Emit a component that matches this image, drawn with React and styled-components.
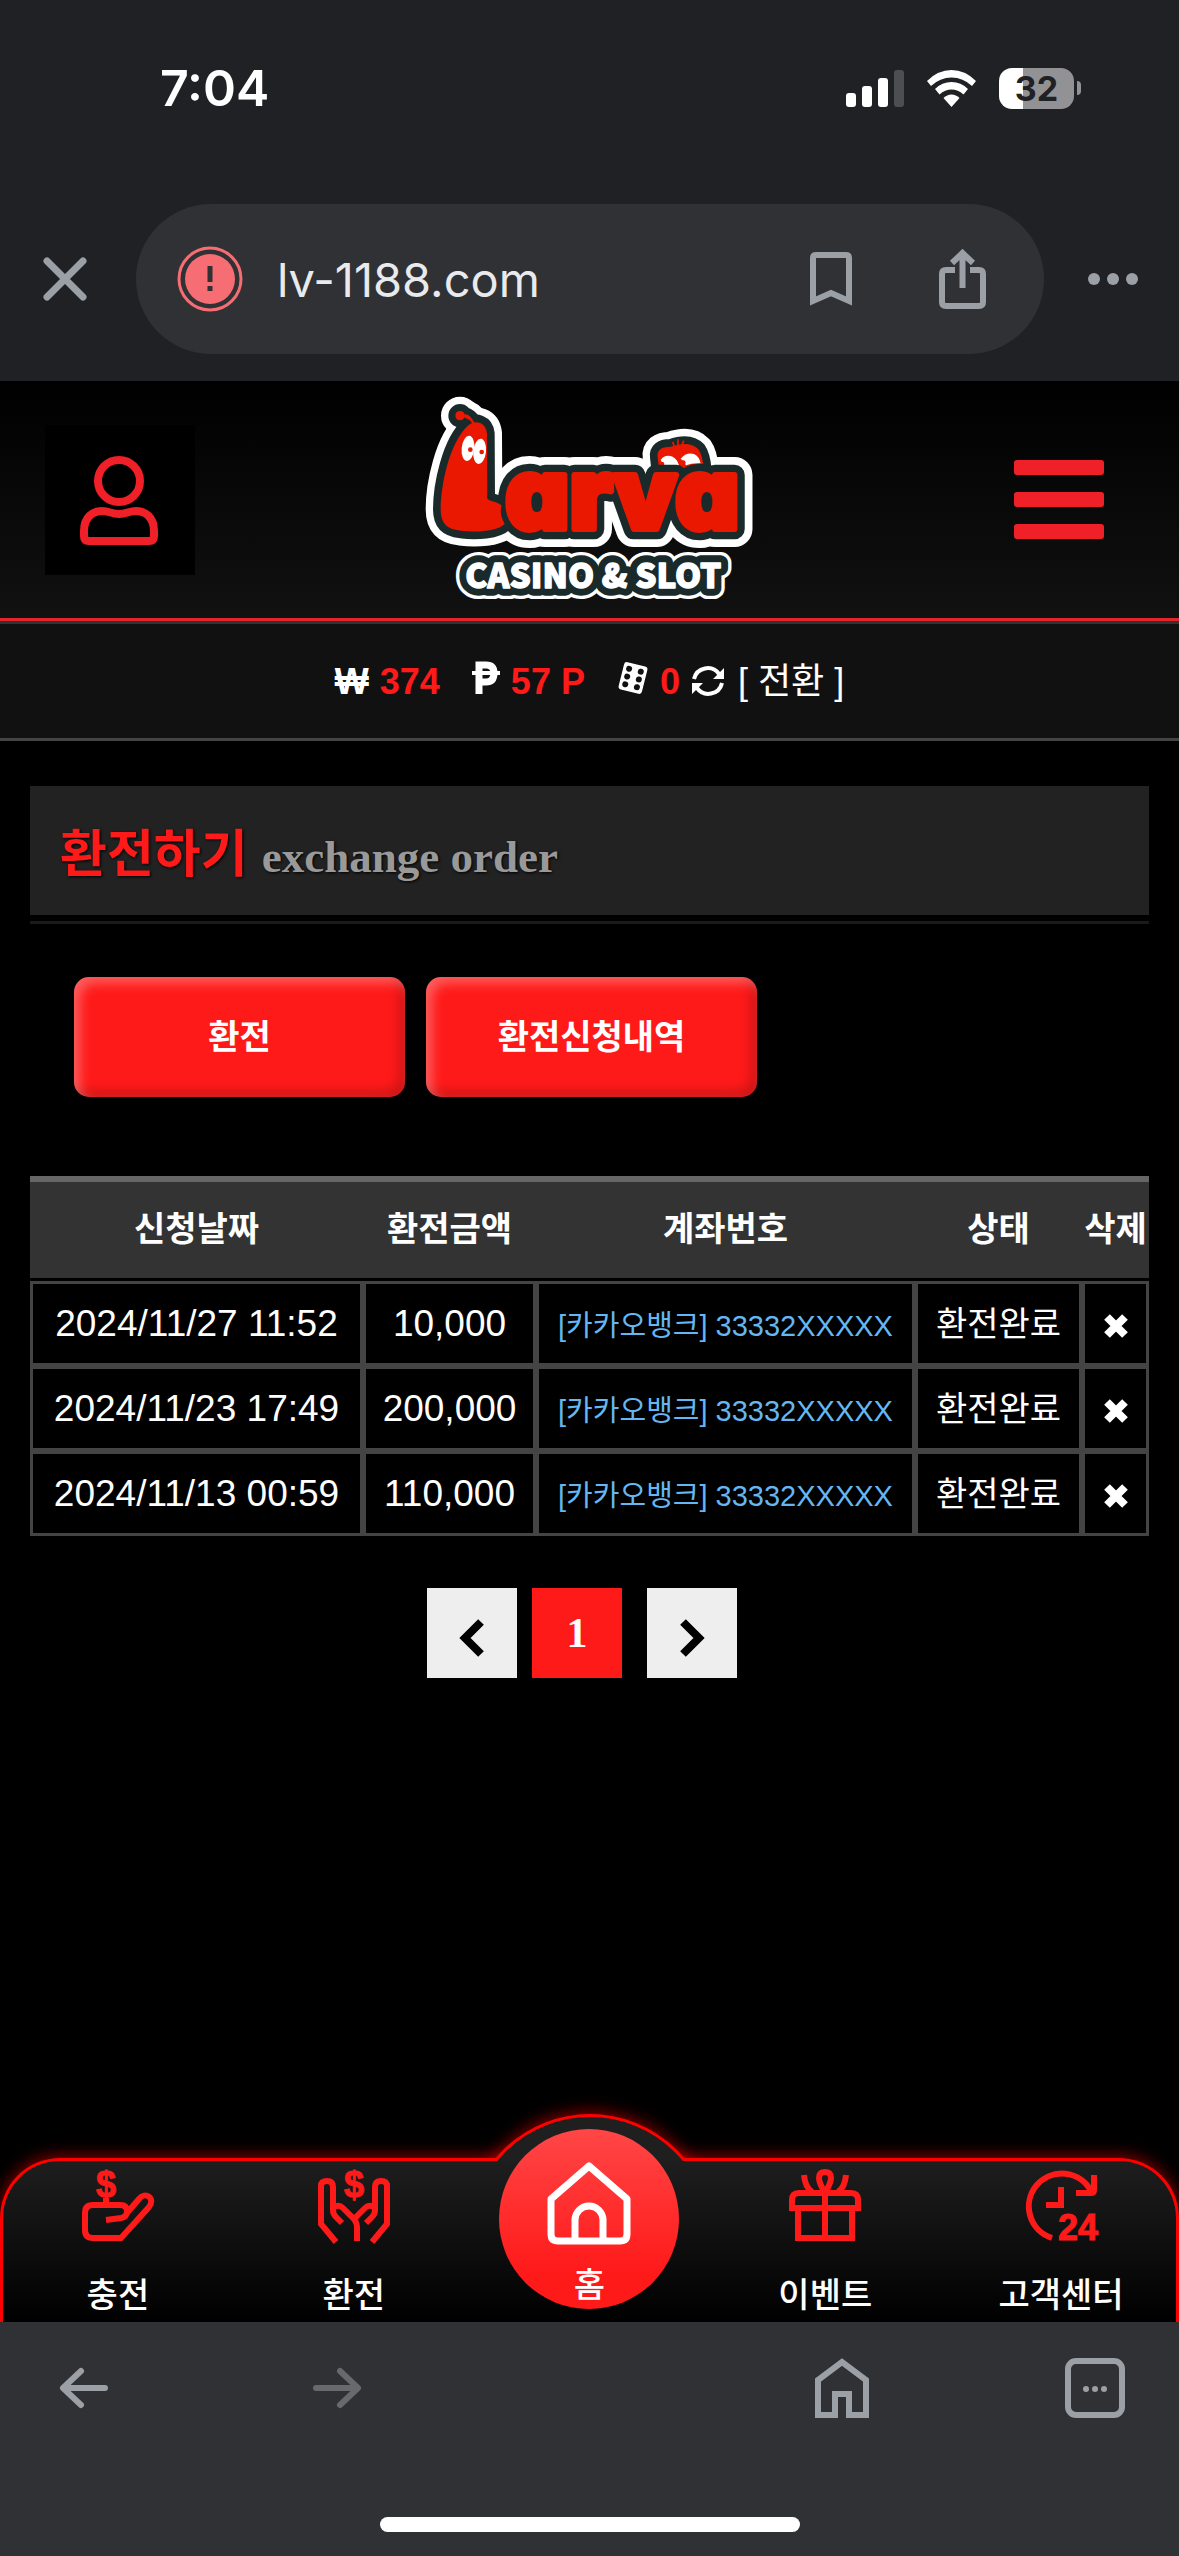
import React from "react";
import styled, { createGlobalStyle } from "styled-components";

const GlobalStyle = createGlobalStyle`
  * {
    box-sizing: border-box;
  }

  body {
    margin: 0;
    background: #000;
    color: #fff;
    font-family: "Liberation Sans", "Noto Sans CJK KR", sans-serif;
  }

  button {
    margin: 0;
    padding: 0;
    border: none;
    background: none;
    color: inherit;
    font-family: inherit;
    cursor: pointer;
  }

  svg {
    display: block;
    flex: none;
    overflow: visible;
  }
`;

const Page = styled.div`
  display: flex;
  flex-direction: column;
  min-height: 100vh;
`;

/* browser top */

const BrowserTop = styled.div`
  background: #202124;
  padding-bottom: 27px;
`;

const StatusBar = styled.div`
  display: flex;
  align-items: center;
  justify-content: space-between;
  height: 204px;
  padding: 0 98px 28px 160px;
`;

const Clock = styled.span`
  font-family: "Inter", sans-serif;
  font-weight: 600;
  font-size: 50px;
`;

const StatusIcons = styled.div`
  display: flex;
  align-items: center;
  gap: 22px;
`;

const Battery = styled.div`
  display: flex;
  align-items: center;
  gap: 3px;
`;

const BatteryBody = styled.span`
  display: flex;
  align-items: center;
  justify-content: center;
  width: 75px;
  height: 41px;
  border-radius: 13px;
  background: linear-gradient(to right, #fff 32%, #929295 32%);
  color: #202124;
  font-family: "Inter", sans-serif;
  font-weight: 700;
  font-size: 34px;
  line-height: 41px;
`;

const BatteryNub = styled.span`
  width: 4px;
  height: 14px;
  border-radius: 0 4px 4px 0;
  background: #929295;
`;

const UrlRow = styled.div`
  display: flex;
  align-items: center;
  gap: 44px;
  padding: 0 41px 0 44px;
  color: #9aa0a6;
`;

const Omnibox = styled.div`
  display: flex;
  flex: 1;
  align-items: center;
  min-width: 0;
  height: 150px;
  margin-left: 6px;
  padding: 0 58px 0 41px;
  border-radius: 75px;
  background: #303134;
`;

const UrlInput = styled.input`
  flex: 1;
  min-width: 0;
  margin: 0 24px 0 34px;
  padding: 0;
  border: none;
  outline: none;
  background: none;
  color: #e8eaed;
  font-family: "Inter", sans-serif;
  font-size: 47px;
`;

const OmniActions = styled.div`
  display: flex;
  align-items: center;
  gap: 87px;
`;

/* site header */

const Header = styled.header`
  display: grid;
  grid-template-columns: 1fr auto 1fr;
  align-items: center;
  padding: 0 75px 0 45px;
  border-bottom: 3px solid #e3242b;
  background: linear-gradient(#000, #111);
`;

const UserButton = styled.button`
  display: flex;
  align-items: center;
  justify-content: center;
  width: 150px;
  height: 150px;
  background: #000;
`;

const LogoLink = styled.a`
  margin-left: 30px;
`;

const LogoWord = styled.text`
  font-family: "Inter", sans-serif;
  font-weight: 900;
  font-size: 298px;
  font-feature-settings: "cv11";
`;

const LogoTagline = styled.text`
  font-family: "Noto Sans CJK KR", sans-serif;
  font-weight: 900;
  font-size: 100px;
`;

const MenuButton = styled.button`
  display: flex;
  flex-direction: column;
  gap: 17px;
  width: 90px;
  justify-self: end;
`;

const MenuLine = styled.span`
  height: 15px;
  border-radius: 3px;
  background: #f02028;
`;

const BalanceBar = styled.div`
  display: flex;
  align-items: baseline;
  justify-content: center;
  gap: 12px;
  height: 120px;
  padding-top: 36px;
  border-top: 3px solid #333;
  border-bottom: 3px solid #444;
  background: #111;
  font-size: 36px;
  line-height: 44px;

  svg {
    margin-bottom: -6px;
  }
`;

const Balance = styled.div`
  display: flex;
  align-items: baseline;
  gap: 11px;
  margin-right: ${(props) => (props.$last ? "0" : "20px")};
  color: #ff1a1a;
  font-weight: 700;

  span {
    color: #fff;
  }
`;

const ConvertButton = styled.button`
  display: flex;
  align-items: baseline;
  gap: 14px;
  font-size: 36px;
  line-height: 44px;
`;

/* content */

const Main = styled.main`
  flex: 1;
  padding: 45px 30px;
`;

const TitleBar = styled.div`
  display: flex;
  align-items: baseline;
  gap: 14px;
  height: 129px;
  padding: 28px 30px 0;
  background: #222;
  text-shadow: 1px 1px 3px #000;
`;

const Title = styled.h1`
  margin: 0;
  color: #ff1a1a;
  font-family: "Noto Sans CJK KR", sans-serif;
  font-weight: 700;
  font-size: 51px;
  line-height: 72px;
`;

const Subtitle = styled.span`
  color: #999;
  font-family: "Liberation Serif", serif;
  font-weight: 700;
  font-size: 45px;
`;

const Rule = styled.hr`
  height: 3px;
  margin: 6px 0 0;
  border: none;
  background: #1a1a1a;
`;

const Tabs = styled.div`
  display: flex;
  gap: 21px;
  padding: 53px 44px 79px;
`;

const TabButton = styled.button`
  width: 331px;
  height: 120px;
  padding-bottom: 6px;
  border-radius: 15px;
  background: #ff1a1a;
  box-shadow: inset 6px 6px 12px rgba(255, 255, 255, 0.3),
    inset -6px -6px 12px rgba(0, 0, 0, 0.2);
  font-weight: 700;
  font-size: 34px;
`;

const Table = styled.table`
  width: 100%;
  border-collapse: separate;
  border-spacing: 0;
  text-align: center;
  white-space: nowrap;
`;

const Th = styled.th`
  height: 105px;
  padding: 0 0 8px;
  border-top: 6px solid #666;
  border-bottom: 3px solid #000;
  background: #333;
  background-clip: padding-box;
  font-weight: 700;
  font-size: 34px;
`;

const Td = styled.td`
  width: ${(props) => props.$width}px;
  height: 85px;
  padding: ${(props) => (props.$low ? "4px 0 0" : "0")};
  border: 3px solid #444;
  color: ${(props) => (props.$account ? "#64b7f2" : "#fff")};
  font-size: ${(props) => props.$size || 37}px;
  line-height: 48px;

  button {
    display: flex;
    margin: 0 auto;
  }
`;

const Pager = styled.nav`
  display: flex;
  justify-content: center;
  padding: 52px 15px 0 0;
`;

const PageButton = styled.button`
  display: flex;
  align-items: center;
  justify-content: center;
  width: 90px;
  height: 90px;
  margin-right: ${(props) => props.$gap || 0}px;
  background: ${(props) => (props.$active ? "#ff1a1a" : "#eee")};
  color: ${(props) => (props.$active ? "#fff" : "#000")};
  font-family: "Liberation Serif", serif;
  font-weight: 700;
  font-size: 42px;

  svg {
    margin-top: 9px;
  }
`;

/* bottom menu */

const BottomMenu = styled.nav`
  position: relative;
  height: 164px;
  border: 3px solid #f00;
  border-bottom: none;
  border-radius: 60px 60px 0 0;
  background: linear-gradient(#1e1e1e, #000);
  box-shadow: 0 -2px 16px rgba(255, 0, 0, 0.55);
`;

const MenuList = styled.div`
  display: grid;
  grid-template-columns: repeat(5, 1fr);
  margin: 0 -3px;
`;

const Bump = styled.span`
  position: absolute;
  top: -47px;
  left: 50%;
  width: 246px;
  height: 246px;
  border: 3px solid #f00;
  border-radius: 50%;
  background: #1f1f1f;
  box-shadow: 0 -2px 16px rgba(255, 0, 0, 0.55);
  transform: translateX(-50%);
  clip-path: inset(-30px -30px 199px -30px);
`;

const MenuItem = styled.a`
  display: flex;
  flex-direction: column;
  align-items: center;
  gap: 28px;
  padding-top: 8px;
  color: #ff1a1a;
  text-decoration: none;
`;

const MenuLabel = styled.span`
  color: #fff;
  font-family: "Noto Sans CJK KR", sans-serif;
  font-weight: 500;
  font-size: 34px;
  line-height: 48px;
`;

const HomeItem = styled.a`
  position: relative;
  display: flex;
  flex-direction: column;
  align-items: center;
  justify-self: center;
  gap: 14px;
  width: 180px;
  height: 180px;
  margin: -32px 0 -16px;
  padding-top: 32px;
  border-radius: 50%;
  background: linear-gradient(#ff4646, #ff1a1a 80%);
  color: #fff;
  text-decoration: none;
`;

/* browser bottom, sits above the glow of the menu */

const BrowserBottom = styled.div`
  position: relative;
  height: 234px;
  padding-top: 36px;
  background: #303134;
`;

const Toolbar = styled.div`
  display: grid;
  grid-template-columns: repeat(5, 60px);
  align-items: center;
  justify-content: space-between;
  justify-items: center;
  padding: 0 54px;
  color: #9aa0a6;
`;

const ToolButton = styled.button`
  grid-column: ${(props) => props.$col};
  color: ${(props) => (props.disabled ? "#66696e" : "#9aa0a6")};
`;

const HomeIndicator = styled.div`
  width: 420px;
  height: 15px;
  margin: 99px auto 0;
  border-radius: 8px;
  background: #fff;
`;

function Logo() {
  return (
    <svg width="380" height="237" viewBox="0 3 1140 711" role="img" aria-label="Larva Casino & Slot">
      <defs>
        <g id="worm">
          <path d="M205 136C228 118 257 128 261 160L262 346Q258 358 272 362Q292 366 305 376C298 404 306 414 314 432C292 454 230 458 182 452C140 448 122 430 122 388C122 318 148 186 205 136Z" />
          <path d="M180 106L196 106Q210 108 220 126" />
          <circle cx="180" cy="107" r="12" />
        </g>
        <path id="friend" d="M777 268L773 232Q768 200 812 200Q868 180 895 208Q908 226 912 270L830 292Z" />
        <LogoWord id="word" x="316" y="446">
          arva
        </LogoWord>
        <LogoTagline id="tagline" x="196" y="624">
          CASINO &amp; SLOT
        </LogoTagline>
      </defs>

      <g stroke="#fff" fill="#fff" strokeLinejoin="round" strokeLinecap="round">
        <use href="#worm" strokeWidth="90" />
        <use href="#friend" strokeWidth="90" />
        <use href="#word" strokeWidth="108" />
        <use href="#tagline" strokeWidth="66" />
      </g>
      <g stroke="#1a2a2a" fill="#1a2a2a" strokeLinejoin="round" strokeLinecap="round">
        <use href="#worm" strokeWidth="46" />
        <use href="#friend" strokeWidth="46" />
        <use href="#tagline" strokeWidth="46" />
      </g>
      <use href="#friend" fill="#ea1800" />
      <path d="M824 202L818 186M834 200V178M844 200L851 182" stroke="#ea1800" strokeWidth="5" />
      <path d="M782 240Q795 222 818 230Q834 238 838 262Q808 266 776 258Q790 250 782 240Z" fill="#fff" />
      <path d="M842 236Q858 216 882 222Q898 230 902 250Q878 248 858 256Q852 242 842 236Z" fill="#fff" />
      <circle cx="786" cy="252" r="7" fill="#ea1800" />
      <circle cx="850" cy="248" r="7" fill="#ea1800" />
      <use href="#word" stroke="#1a2a2a" fill="#1a2a2a" strokeWidth="62" strokeLinejoin="round" />
      <g fill="#ea1800">
        <use href="#worm" />
        <path d="M180 106L196 106Q210 108 220 130" stroke="#ea1800" strokeWidth="7" fill="none" />
        <circle cx="180" cy="107" r="14" />
        <use href="#word" stroke="#ea1800" strokeWidth="18" strokeLinejoin="round" />
      </g>
      <ellipse cx="204" cy="205" rx="19" ry="38" fill="#fff" transform="rotate(6 204 205)" />
      <ellipse cx="239" cy="214" rx="19" ry="38" fill="#fff" transform="rotate(6 239 214)" />
      <circle cx="211" cy="209" r="7" fill="#ea1800" />
      <circle cx="245" cy="216" r="7" fill="#ea1800" />
      <use href="#tagline" fill="#fff" stroke="#fff" strokeWidth="4" strokeLinejoin="round" />
    </svg>
  );
}

const Stroke = ({ size = 72, width = 6, children, ...rest }) => (
  <svg
    width={size}
    height={size}
    viewBox={`0 0 ${size} ${size}`}
    fill="none"
    stroke="currentColor"
    strokeWidth={width}
    aria-hidden="true"
    {...rest}
  >
    {children}
  </svg>
);

const IconText = styled.text`
  fill: currentColor;
  stroke: currentColor;
  stroke-width: 1px;
  font-family: "Liberation Sans", sans-serif;
  font-weight: 700;
  font-size: ${(props) => props.$size}px;
  text-anchor: middle;
`;

const DepositIcon = () => (
  <Stroke>
    <IconText x="24" y="28" $size={36}>
      $
    </IconText>
    <path d="M24 29V36" />
    <path d="M24 51L39 49Q45 48 45 42Q45 36 38 36H11Q3 36 3 44V61Q3 69 11 69H39L67 38C74 29 63 22 57 30L44 45" />
  </Stroke>
);

const WithdrawIcon = () => (
  <Stroke>
    <IconText x="36" y="28" $size={36}>
      $
    </IconText>
    <path d="M18 73L3 55V17Q3 12 9 12Q15 12 15 18V41Q15 45 18 48L24 54" />
    <path d="M54 73L69 55V17Q69 12 63 12Q57 12 57 18V41Q57 45 54 48L48 54" />
    <path d="M16 38Q21 35 25 39L33 47Q39 52 39 58V72" />
    <path d="M56 38Q51 35 47 39L36 50" />
  </Stroke>
);

const GiftIcon = () => (
  <Stroke>
    <path d="M3 42V31Q3 24 10 24H62Q69 24 69 31V42M0 39H72M9 42V69H63V42M36 24V69" />
    <path d="M15 6Q16 18 23 23M57 6Q56 18 49 23" />
    <path d="M36 24Q30 14 30 9Q30 3 36 3Q42 3 42 9Q42 14 36 24Z" />
  </Stroke>
);

const SupportIcon = () => (
  <Stroke>
    <path d="M27 69A33 33 0 1 1 66 22" />
    <path d="M69 6V21Q69 24 66 24H51M36 18V36H21" />
    <IconText x="53" y="71" $size={36}>
      24
    </IconText>
  </Stroke>
);

const HomeIcon = () => (
  <Stroke size={84} width={7}>
    <path d="M4 38L42 5L80 38V73Q80 80 73 80H11Q4 80 4 73Z" strokeLinejoin="round" />
    <path d="M28 80V59A14 14 0 0 1 56 59V80" />
  </Stroke>
);

const rows = [
  { date: "2024/11/27 11:52", amount: "10,000" },
  { date: "2024/11/23 17:49", amount: "200,000" },
  { date: "2024/11/13 00:59", amount: "110,000" },
];

export default function App() {
  return (
    <>
      <GlobalStyle />
      <Page>
        <BrowserTop>
          <StatusBar>
            <Clock>7:04</Clock>
            <StatusIcons>
              <svg width="58" height="38" fill="#fff" aria-hidden="true">
                <rect x="0" y="24" width="10" height="14" rx="3" />
                <rect x="16" y="17" width="10" height="21" rx="3" />
                <rect x="32" y="9" width="10" height="29" rx="3" />
                <rect x="48" y="1" width="10" height="37" rx="3" fill="#4d4e51" />
              </svg>
              <svg width="51" height="38" viewBox="0 0 51 38" fill="#fff" aria-hidden="true">
                <path d="M1 12Q12 1 25.500 1Q39 1 50 12L46 17Q37 8.500 25.500 8.500Q14 8.500 5 17Z" />
                <path d="M9 20Q16 13 25.500 13Q35 13 42 20L37.500 25.500Q32 20.500 25.500 20.500Q19 20.500 13.500 25.500Z" />
                <path d="M17.500 29Q21 25.500 25.500 25.500Q30 25.500 33.500 29L25.500 38Z" />
              </svg>
              <Battery>
                <BatteryBody>32</BatteryBody>
                <BatteryNub />
              </Battery>
            </StatusIcons>
          </StatusBar>
          <UrlRow>
            <button aria-label="Close">
              <Stroke size={42} width={7} strokeLinecap="round">
                <path d="M3 3L39 39M39 3L3 39" />
              </Stroke>
            </button>
            <Omnibox>
              <svg width="66" height="66" aria-hidden="true">
                <circle cx="33" cy="33" r="31" fill="none" stroke="#f66d73" strokeWidth="3" />
                <circle cx="33" cy="33" r="25" fill="#f66d73" />
                <path d="M33 20V36M33 40V45" stroke="#303134" strokeWidth="5" />
              </svg>
              <UrlInput aria-label="Address" defaultValue="lv-1188.com" />
              <OmniActions>
                <button aria-label="Bookmark">
                  <svg width="42" height="54" fill="none" stroke="currentColor" strokeWidth="6" aria-hidden="true">
                    <path d="M3 49V6Q3 3 6 3H36Q39 3 39 6V49L21 41Z" />
                  </svg>
                </button>
                <button aria-label="Share">
                  <svg width="47" height="60" fill="none" stroke="currentColor" strokeWidth="6" aria-hidden="true">
                    <path d="M16 21H7Q3 21 3 25V53Q3 57 7 57H40Q44 57 44 53V25Q44 21 40 21H31" />
                    <path d="M23.500 39V5M13 14L23.500 4L34 14" />
                  </svg>
                </button>
              </OmniActions>
            </Omnibox>
            <button aria-label="More">
              <svg width="50" height="12" fill="currentColor" aria-hidden="true">
                <circle cx="6" cy="6" r="6" />
                <circle cx="25" cy="6" r="6" />
                <circle cx="44" cy="6" r="6" />
              </svg>
            </button>
          </UrlRow>
        </BrowserTop>

        <Header>
          <UserButton aria-label="My page">
            <svg width="80" height="90" fill="none" stroke="#f02028" strokeWidth="8" aria-hidden="true">
              <circle cx="39" cy="26" r="21" />
              <path d="M4 76C4 62 13 56 22 56C29 56 32 59 39 59C46 59 49 56 56 56C65 56 74 62 74 76V81Q74 86 69 86H9Q4 86 4 81Z" />
            </svg>
          </UserButton>
          <LogoLink href="#">
            <Logo />
          </LogoLink>
          <MenuButton aria-label="Menu">
            <MenuLine />
            <MenuLine />
            <MenuLine />
          </MenuButton>
        </Header>

        <BalanceBar>
          <Balance>
            <span>₩</span>374
          </Balance>
          <Balance>
            <svg width="28" height="32" fill="none" stroke="#fff" aria-hidden="true">
              <path d="M7 32V3H14Q22 3 22 11Q22 20 14 20H8" strokeWidth="7" />
              <path d="M0 11H28" strokeWidth="4" />
            </svg>
            57 P
          </Balance>
          <Balance $last>
            <svg width="32" height="32" viewBox="0 0 32 32" aria-hidden="true">
              <g transform="rotate(14 16 16)">
                <rect x="4" y="2" width="24" height="28" rx="3" fill="#fff" />
                <g fill="#111">
                  <circle cx="10" cy="8" r="3" />
                  <circle cx="10" cy="16" r="3" />
                  <circle cx="10" cy="24" r="3" />
                  <circle cx="22" cy="8" r="3" />
                  <circle cx="22" cy="16" r="3" />
                  <circle cx="22" cy="24" r="3" />
                </g>
              </g>
            </svg>
            0
          </Balance>
          <ConvertButton>
            <svg width="32" height="32" viewBox="0 -3 32 32" fill="none" stroke="#fff" strokeWidth="4" aria-hidden="true">
              <path d="M2 14A14 14 0 0 1 27 9M30 18A14 14 0 0 1 5 23" />
              <path d="M32 3V14H21ZM0 29V18H11Z" fill="#fff" stroke="none" />
            </svg>
            [ 전환 ]
          </ConvertButton>
        </BalanceBar>

        <Main>
          <TitleBar>
            <Title>환전하기</Title>
            <Subtitle>exchange order</Subtitle>
          </TitleBar>
          <Rule />
          <Tabs>
            <TabButton>환전</TabButton>
            <TabButton>환전신청내역</TabButton>
          </Tabs>

          <Table>
            <thead>
              <tr>
                <Th>신청날짜</Th>
                <Th>환전금액</Th>
                <Th>계좌번호</Th>
                <Th>상태</Th>
                <Th>삭제</Th>
              </tr>
            </thead>
            <tbody>
              {rows.map((row) => (
                <tr key={row.date}>
                  <Td $width={333}>{row.date}</Td>
                  <Td $width={173}>{row.amount}</Td>
                  <Td $width={379} $size={29} $account $low>
                    [카카오뱅크] 33332XXXXX
                  </Td>
                  <Td $width={167} $size={34}>
                    환전완료
                  </Td>
                  <Td $width={67} $low>
                    <button aria-label="삭제">
                      <Stroke size={24} width={8}>
                        <path d="M3 3L21 21M21 3L3 21" />
                      </Stroke>
                    </button>
                  </Td>
                </tr>
              ))}
            </tbody>
          </Table>

          <Pager>
            <PageButton aria-label="Previous" $gap={15}>
              <svg width="24" height="38" fill="none" stroke="#000" strokeWidth="8" aria-hidden="true">
                <path d="M21 3L5 19L21 35" />
              </svg>
            </PageButton>
            <PageButton $active $gap={25}>
              1
            </PageButton>
            <PageButton aria-label="Next">
              <svg width="24" height="38" fill="none" stroke="#000" strokeWidth="8" aria-hidden="true">
                <path d="M3 3L19 19L3 35" />
              </svg>
            </PageButton>
          </Pager>
        </Main>

        <BottomMenu>
          <Bump />
          <MenuList>
            <MenuItem href="#">
              <DepositIcon />
              <MenuLabel>충전</MenuLabel>
            </MenuItem>
            <MenuItem href="#">
              <WithdrawIcon />
              <MenuLabel>환전</MenuLabel>
            </MenuItem>
            <HomeItem href="#">
              <HomeIcon />
              <MenuLabel>홈</MenuLabel>
            </HomeItem>
            <MenuItem href="#">
              <GiftIcon />
              <MenuLabel>이벤트</MenuLabel>
            </MenuItem>
            <MenuItem href="#">
              <SupportIcon />
              <MenuLabel>고객센터</MenuLabel>
            </MenuItem>
          </MenuList>
        </BottomMenu>

        <BrowserBottom>
          <Toolbar>
            <ToolButton $col={1} aria-label="Back">
              <Stroke size={50} strokeLinecap="round" strokeLinejoin="round">
                <path d="M46 25H5M22 8L4 25L22 42" />
              </Stroke>
            </ToolButton>
            <ToolButton $col={2} aria-label="Forward" disabled>
              <Stroke size={50} strokeLinecap="round" strokeLinejoin="round">
                <path d="M4 25H45M28 8L46 25L28 42" />
              </Stroke>
            </ToolButton>
            <ToolButton $col={4} aria-label="Home">
              <Stroke size={60}>
                <path d="M6 57V22L30 4L54 22V57H37V36H23V57Z" />
              </Stroke>
            </ToolButton>
            <ToolButton $col={5} aria-label="Tabs">
              <Stroke size={60}>
                <rect x="3" y="3" width="54" height="54" rx="8" />
                <g fill="currentColor" stroke="none">
                  <circle cx="21" cy="31" r="3" />
                  <circle cx="30" cy="31" r="3" />
                  <circle cx="39" cy="31" r="3" />
                </g>
              </Stroke>
            </ToolButton>
          </Toolbar>
          <HomeIndicator />
        </BrowserBottom>
      </Page>
    </>
  );
}
